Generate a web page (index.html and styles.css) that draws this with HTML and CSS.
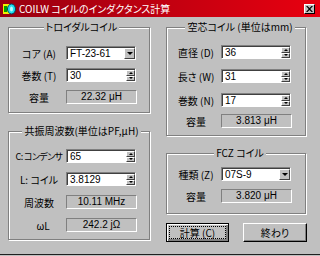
FILE: index.html
```html
<!DOCTYPE html>
<html lang="ja">
<head>
  <meta charset="UTF-8">
  <title>COILW</title>
  <link rel="stylesheet" href="styles.css">
</head>
<body>
  <div id="window">
    <!-- Title bar -->
    <div id="title-bar">
      <svg class="app-icon" width="13" height="12" viewBox="0 0 13 12">
        <rect x="0" y="1" width="7" height="10" fill="#f0f000"/>
        <rect x="1" y="3" width="3" height="6" fill="#00a000"/>
        <ellipse cx="8.5" cy="6" rx="4" ry="5" fill="#20e0f0" stroke="#004060" stroke-width="1"/>
        <ellipse cx="8.5" cy="6" rx="1.5" ry="2.5" fill="#c0f8ff"/>
      </svg>
      <span class="title-text">COILW コイルのインダクタンス計算</span>
      <span class="close-btn">
        <svg width="7" height="6" viewBox="0 0 7 6">
          <path d="M0 0 L1.5 0 L3.5 2 L5.5 0 L7 0 L4.3 3 L7 6 L5.5 6 L3.5 4 L1.5 6 L0 6 L2.7 3 Z" fill="#000"/>
        </svg>
      </span>
    </div>

    <div id="client">
      <!-- Left column -->
      <div class="column left-col">
        <div class="group toroidal">
          <div class="group-title">トロイダルコイル</div>
          <div class="row first">
            <span class="label">コア (A)</span>
            <div class="field combo"><span class="value">FT-23-61</span><span class="drop-btn"></span></div>
          </div>
          <div class="row">
            <span class="label">巻数 (T)</span>
            <div class="field spin"><span class="value">30</span><span class="spin-btns"><i class="up"></i><i class="down"></i></span></div>
          </div>
          <div class="row">
            <span class="label">容量</span>
            <div class="readout">22.32 μH</div>
          </div>
        </div>

        <div class="group resonance">
          <div class="group-title">共振周波数(単位はPF,μH)</div>
          <div class="row first">
            <span class="label narrow">C: コンデンサ</span>
            <div class="field spin"><span class="value">65</span><span class="spin-btns"><i class="up"></i><i class="down"></i></span></div>
          </div>
          <div class="row">
            <span class="label">L: コイル</span>
            <div class="field spin"><span class="value">3.8129</span><span class="spin-btns"><i class="up"></i><i class="down"></i></span></div>
          </div>
          <div class="row">
            <span class="label">周波数</span>
            <div class="readout">10.11 MHz</div>
          </div>
          <div class="row">
            <span class="label omega">ωL</span>
            <div class="readout">242.2 jΩ</div>
          </div>
        </div>
      </div>

      <!-- Right column -->
      <div class="column right-col">
        <div class="group aircore">
          <div class="group-title">空芯コイル (単位はmm)</div>
          <div class="row first">
            <span class="label">直径 (D)</span>
            <div class="field spin"><span class="value">36</span><span class="spin-btns"><i class="up"></i><i class="down"></i></span></div>
          </div>
          <div class="row">
            <span class="label">長さ (W)</span>
            <div class="field spin"><span class="value">31</span><span class="spin-btns"><i class="up"></i><i class="down"></i></span></div>
          </div>
          <div class="row">
            <span class="label">巻数 (N)</span>
            <div class="field spin"><span class="value">17</span><span class="spin-btns"><i class="up"></i><i class="down"></i></span></div>
          </div>
          <div class="row last">
            <span class="label">容量</span>
            <div class="readout">3.813 μH</div>
          </div>
        </div>

        <div class="group fcz">
          <div class="group-title">FCZ コイル</div>
          <div class="row first">
            <span class="label">種類 (Z)</span>
            <div class="field combo"><span class="value">07S-9</span><span class="drop-btn"></span></div>
          </div>
          <div class="row">
            <span class="label">容量</span>
            <div class="readout">3.820 μH</div>
          </div>
        </div>

        <div class="button-row">
          <button class="win-btn default"><span class="focus">計算 (C)</span></button>
          <button class="win-btn">終わり</button>
        </div>
      </div>
    </div>
  </div>
</body>
</html>
```

FILE: styles.css
```css
/* Classic Windows dialog look */
body {
  margin: 0;
  background-color: #c0c0c0;
  color: #000;
  font-family: "Noto Sans CJK JP", "Liberation Sans", sans-serif;
  font-size: 10px;
  font-feature-settings: "palt";
}
#window {
  width: 320px;
  height: 254px;
  border-bottom: 1px solid #202020;
  background-color: #c0c0c0;
}
/* Title bar */
#title-bar {
  height: 17px;
  display: flex;
  align-items: center;
  padding: 0 5px 0 3px;
  background: linear-gradient(to right, #980010, #e80010);
  color: #fff;
}
.app-icon {
  margin-right: 3px;
}
.title-text {
  flex: 1;
  font-size: 10px;
  line-height: 12px;
}
.close-btn {
  width: 11px;
  height: 10px;
  box-sizing: border-box;
  background: #c0c0c0;
  border: 1px solid;
  border-color: #fff #000 #000 #fff;
  display: flex;
  align-items: center;
  justify-content: center;
}
/* Client area */
#client {
  display: flex;
  gap: 16px;
  padding: 10px 0 0 8px;
}
.left-col {
  width: 142px;
}
.right-col {
  width: 140px;
}
/* Etched group box */
.group {
  border: 1px solid #808080;
  box-shadow: inset 1px 1px #fff, 1px 1px #fff;
}
.group-title {
  display: table;
  margin: -7px auto 0;
  padding: 0 2px;
  line-height: 12px;
  background: #c0c0c0;
}
.row {
  display: flex;
  align-items: center;
  height: 14px;
}
.label {
  flex-shrink: 0;
  text-align: center;
  white-space: nowrap;
}
.label.narrow {
  font-size: 9px;
  letter-spacing: -0.6px;
}
.label.omega {
  padding-left: 8px;
  box-sizing: border-box;
}
.left-col .group {
  padding: 0 0 0 5px;
}
.left-col .label {
  width: 50px;
  margin-right: 2px;
}
.right-col .group {
  padding: 0 0 0 8px;
}
.right-col .label {
  width: 42px;
  margin-right: 4px;
}
/* Vertical rhythm of each box */
.toroidal { padding-bottom: 8px !important; }
.toroidal .row { margin-top: 8px; }
.toroidal .row.first { margin-top: 13px; }
.resonance { margin-top: 18px; padding-bottom: 7px !important; }
.resonance .row { margin-top: 9px; }
.resonance .row.first { margin-top: 12px; }
.aircore { padding-bottom: 7px !important; }
.aircore .row { margin-top: 10px; }
.aircore .row.first { margin-top: 12px; }
.aircore .row.last { margin-top: 7px; }
.fcz { margin-top: 17px; padding-bottom: 10px !important; }
.fcz .row { margin-top: 8px; }
/* Edit fields */
.field {
  display: flex;
  flex-shrink: 0;
  width: 70px;
  height: 14px;
  box-sizing: border-box;
  background: #fff;
  border: 1px solid;
  border-color: #808080 #fff #fff #808080;
  padding: 1px 0 0 1px;
  box-shadow: inset 1px 1px #404040;
}
.field .value {
  flex: 1;
  padding-left: 2px;
  font-family: "Liberation Sans", sans-serif;
  font-size: 10px;
  line-height: 11px;
}
.spin-btns {
  width: 9px;
  display: flex;
  flex-direction: column;
}
.spin-btns i {
  flex: 1;
  display: flex;
  align-items: center;
  justify-content: center;
  background: #c0c0c0;
  border: 1px solid;
  border-color: #fff #404040 #404040 #fff;
}
.spin-btns i::after {
  content: "";
  border-left: 2px solid transparent;
  border-right: 2px solid transparent;
}
.spin-btns .up::after {
  border-bottom: 2px solid #000;
}
.spin-btns .down::after {
  border-top: 2px solid #000;
}
.drop-btn {
  width: 11px;
  display: flex;
  align-items: center;
  justify-content: center;
  box-sizing: border-box;
  background: #c0c0c0;
  border: 1px solid;
  border-color: #fff #404040 #404040 #fff;
}
.drop-btn::after {
  content: "";
  border-left: 3px solid transparent;
  border-right: 3px solid transparent;
  border-top: 3px solid #000;
}
/* Read-only result boxes */
.readout {
  flex-shrink: 0;
  width: 71px;
  height: 14px;
  box-sizing: border-box;
  border: 1px solid;
  border-color: #808080 #fff #fff #808080;
  text-align: center;
  font-family: "Liberation Sans", "Noto Sans CJK JP", sans-serif;
  font-size: 10px;
  line-height: 12px;
}
/* Push buttons */
.button-row {
  display: flex;
  justify-content: space-between;
  width: 141px;
  margin-top: 9px;
}
.win-btn {
  width: 64px;
  height: 19px;
  padding: 0;
  background: #c0c0c0;
  border: 1px solid;
  border-color: #fff #000 #000 #fff;
  box-shadow: inset -1px -1px #808080;
  font-family: "Noto Sans CJK JP", sans-serif;
  font-size: 10px;
  font-feature-settings: "palt";
  color: #000;
  display: flex;
  align-items: center;
  justify-content: center;
}
.win-btn.default {
  width: 63px;
  border-color: #000;
  box-shadow: inset 1px 1px #fff, inset -2px -2px #808080;
}
.win-btn .focus {
  flex: 1;
  margin: 0 2px;
  line-height: 11px;
  border: 1px dotted #000;
}
```
